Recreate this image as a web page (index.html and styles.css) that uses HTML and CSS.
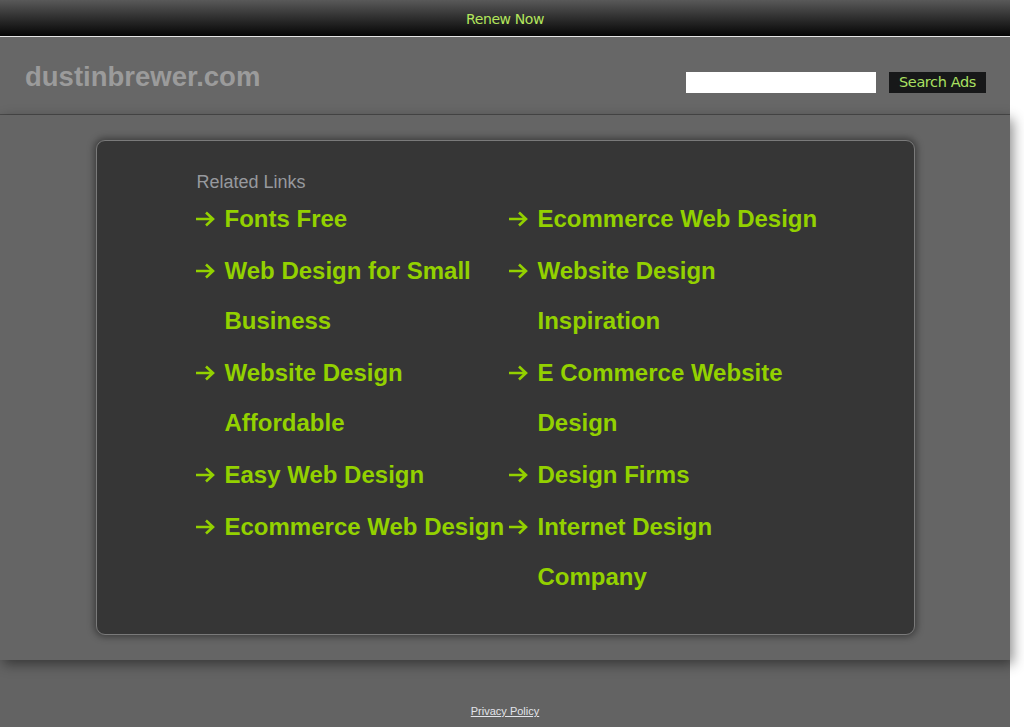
FILE: index.html
```html
<!DOCTYPE html>
<html lang="en">
<head>
    <meta charset="UTF-8">
    <meta name="viewport" content="width=device-width, initial-scale=1.0">
    <title>dustinbrewer.com</title>
    <link rel="stylesheet" href="styles.css">
</head>
<body>
    <div class="page">
        <div class="topbar">
            <a href="#" class="renew">Renew Now</a>
        </div>
        <div class="header">
            <h1 class="domain">dustinbrewer.com</h1>
            <form class="search" onsubmit="return false">
                <input type="text" class="search-input">
                <button type="submit" class="search-btn">Search Ads</button>
            </form>
        </div>
        <div class="main">
            <div class="panel">
                <h4 class="panel-title">Related Links</h4>
                <ul class="links">
                    <li><span class="arrow"><svg width="20" height="16" viewBox="0 0 20 16"><path d="M1 8H18M11 1.5L18 8L11 14.5" fill="none" stroke="currentColor" stroke-width="2.6"/></svg></span><a href="#">Fonts Free</a></li>
                    <li><span class="arrow"><svg width="20" height="16" viewBox="0 0 20 16"><path d="M1 8H18M11 1.5L18 8L11 14.5" fill="none" stroke="currentColor" stroke-width="2.6"/></svg></span><a href="#">Ecommerce Web Design</a></li>
                    <li><span class="arrow"><svg width="20" height="16" viewBox="0 0 20 16"><path d="M1 8H18M11 1.5L18 8L11 14.5" fill="none" stroke="currentColor" stroke-width="2.6"/></svg></span><a href="#">Web Design for Small Business</a></li>
                    <li><span class="arrow"><svg width="20" height="16" viewBox="0 0 20 16"><path d="M1 8H18M11 1.5L18 8L11 14.5" fill="none" stroke="currentColor" stroke-width="2.6"/></svg></span><a href="#">Website Design Inspiration</a></li>
                    <li><span class="arrow"><svg width="20" height="16" viewBox="0 0 20 16"><path d="M1 8H18M11 1.5L18 8L11 14.5" fill="none" stroke="currentColor" stroke-width="2.6"/></svg></span><a href="#">Website Design Affordable</a></li>
                    <li><span class="arrow"><svg width="20" height="16" viewBox="0 0 20 16"><path d="M1 8H18M11 1.5L18 8L11 14.5" fill="none" stroke="currentColor" stroke-width="2.6"/></svg></span><a href="#">E Commerce Website Design</a></li>
                    <li><span class="arrow"><svg width="20" height="16" viewBox="0 0 20 16"><path d="M1 8H18M11 1.5L18 8L11 14.5" fill="none" stroke="currentColor" stroke-width="2.6"/></svg></span><a href="#">Easy Web Design</a></li>
                    <li><span class="arrow"><svg width="20" height="16" viewBox="0 0 20 16"><path d="M1 8H18M11 1.5L18 8L11 14.5" fill="none" stroke="currentColor" stroke-width="2.6"/></svg></span><a href="#">Design Firms</a></li>
                    <li><span class="arrow"><svg width="20" height="16" viewBox="0 0 20 16"><path d="M1 8H18M11 1.5L18 8L11 14.5" fill="none" stroke="currentColor" stroke-width="2.6"/></svg></span><a href="#">Ecommerce Web Design</a></li>
                    <li><span class="arrow"><svg width="20" height="16" viewBox="0 0 20 16"><path d="M1 8H18M11 1.5L18 8L11 14.5" fill="none" stroke="currentColor" stroke-width="2.6"/></svg></span><a href="#">Internet Design Company</a></li>
                </ul>
            </div>
        </div>
        <div class="footer">
            <a href="#" class="privacy">Privacy Policy</a>
        </div>
    </div>
</body>
</html>
```

FILE: styles.css
```css
html, body { margin: 0; padding: 0; background: #fff; }
body { font-family: "Liberation Sans", Arial, sans-serif; overflow: hidden; }
.page { width: 1010px; background: #636363; min-height: 727px; }

.topbar { height: 36px; border-bottom: 1px solid #e4e4e4; background: linear-gradient(#595959, #2a2a2a 55%, #050505); display: flex; justify-content: center; align-items: center; }
.renew { font-family: "DejaVu Sans", sans-serif; font-size: 14px; letter-spacing: -0.4px; color: #b4e65c; text-decoration: none; margin-top: 1px; }

.header { height: 78px; box-sizing: border-box; border-bottom: 1px solid #4a4a4a; background: #676767; display: flex; justify-content: space-between; align-items: flex-start; padding: 24px 24px 0 25px; }
.domain { margin: 0; font-size: 27.5px; line-height: 31px; font-weight: bold; color: #9b9b9b; }
.search { display: flex; gap: 13px; margin: 11px 0 0; }
.search-input { width: 190px; height: 21px; box-sizing: border-box; border: 0; background: #fff; margin: 0; padding: 0 4px; }
.search-btn { width: 97px; height: 21px; border: 0; margin: 0; padding: 0; background: #171819; color: #a9e061; font-family: "DejaVu Sans", sans-serif; font-size: 14.5px; letter-spacing: -0.4px; line-height: 21px; }

.main { position: relative; z-index: 1; background: #656565; padding: 25px 0; box-shadow: 3px 4px 12px rgba(0, 0, 0, 0.45); }
.panel { width: 819px; height: 495px; box-sizing: border-box; margin: 0 auto; background: #363636; border: 1px solid #7a7a7a; border-radius: 9px; box-shadow: 0 0 7px 2px rgba(0, 0, 0, 0.4); padding: 30px 0 0 98px; }
.panel-title { margin: 0 0 1px 2px; font-size: 18px; line-height: 22px; font-weight: normal; color: #97999e; }

.links { list-style: none; margin: 0; padding: 0; display: grid; grid-template-columns: 313px 313px; row-gap: 2px; }
.links li { display: flex; align-items: flex-start; }
.arrow { width: 30px; flex: none; height: 50px; display: flex; align-items: center; color: #93d100; }
.arrow svg { display: block; margin-top: -1px; }
.links a { width: 283px; font-size: 24px; line-height: 50px; font-weight: bold; color: #93d100; text-decoration: none; }

.footer { height: 67px; text-align: center; padding-top: 41px; box-sizing: border-box; }
.privacy { font-size: 11px; line-height: 13px; color: #e2e4ea; text-decoration: underline; }
```
